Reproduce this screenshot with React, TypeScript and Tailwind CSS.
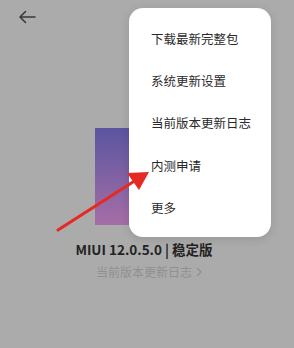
import React from "react";

const menuItems = ["下载最新完整包", "系统更新设置", "当前版本更新日志", "内测申请", "更多"];

export default function App() {
  return (
    <div
      className="relative w-[294px] h-[348px] overflow-hidden bg-[#ababab]"
      style={{ fontFamily: '"Noto Sans CJK SC", "Noto Sans", sans-serif' }}
    >
      {/* header */}
      <div className="h-[32px] flex items-center pl-[18px] pt-[1px]">
        <svg width="18" height="14" viewBox="0 0 18 14" fill="none" stroke="#3a3a3a" strokeWidth="1.6" strokeLinecap="round" strokeLinejoin="round">
          <path d="M17 7H2M7.5 1.5L2 7l5.5 5.5" />
        </svg>
      </div>

      {/* logo block */}
      <div className="flex flex-col items-center">
        <div className="mt-[96px] w-[105px] h-[97px] bg-gradient-to-b from-[#56509f] to-[#a66aa6] opacity-95" />
        <div className="mt-[14px] text-[13.5px] font-semibold text-[#232323] leading-5 -ml-[6px]">
          MIUI 12.0.5.0 | 稳定版
        </div>
        <div className="mt-[3px] flex items-center gap-[4px] text-[12px] text-[#909090] leading-5 ml-[4px]">
          <span>当前版本更新日志</span>
          <svg width="6" height="10" viewBox="0 0 6 10" fill="none" stroke="#909090" strokeWidth="1.2">
            <path d="M1 1l4 4-4 4" />
          </svg>
        </div>
      </div>

      {/* popup menu */}
      <div className="absolute left-[129px] top-[8px] w-[142px] h-[229px] bg-white rounded-[14px] shadow-[0_2px_10px_rgba(0,0,0,0.12)] pt-[10px] pl-[22px]">
        {menuItems.map((item) => (
          <div key={item} className="h-[42.3px] flex items-center text-[12.5px] text-[#2a2a2a] leading-none">
            {item}
          </div>
        ))}
      </div>

      {/* annotation arrow */}
      <svg className="absolute left-0 top-0" width="294" height="348" viewBox="0 0 294 348">
        <line x1="58" y1="230" x2="136" y2="180" stroke="#e52a24" strokeWidth="3.2" strokeLinecap="round" />
        <polygon points="149,172 127,173 139,190" fill="#e52a24" />
      </svg>
    </div>
  );
}
